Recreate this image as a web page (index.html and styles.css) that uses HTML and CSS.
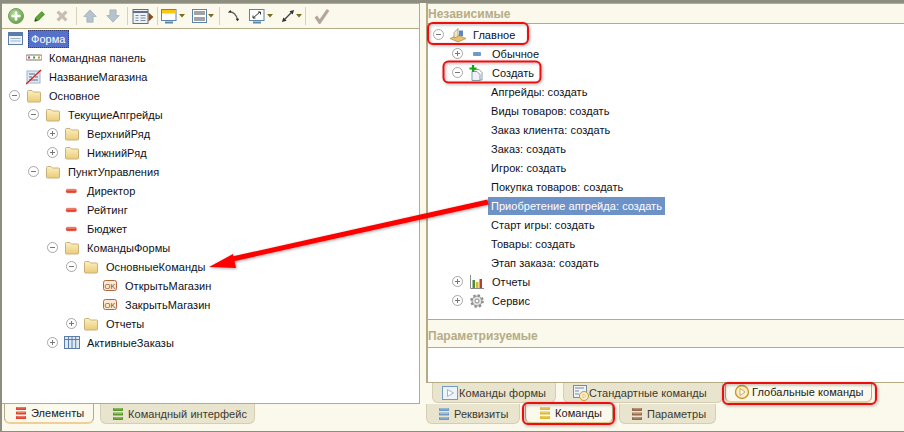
FILE: index.html
```html
<!DOCTYPE html>
<html lang="en">
<head>
  <meta charset="UTF-8">
  <meta name="viewport" content="width=device-width, initial-scale=1.0">
  <title>Форма</title>
  <link rel="stylesheet" href="styles.css">
</head>
<body>
  <svg class="defs" width="0" height="0">
    <defs>
      <linearGradient id="folder" x1="0" y1="0" x2="0" y2="1">
        <stop offset="0" stop-color="#fdf0c0"/>
        <stop offset="1" stop-color="#eacb78"/>
      </linearGradient>
      <radialGradient id="addball" cx=".4" cy=".35" r=".7">
        <stop offset="0" stop-color="#b4dc98"/>
        <stop offset="1" stop-color="#5f9f45"/>
      </radialGradient>
      <symbol id="i-folder" viewBox="0 0 16 16">
        <path d="M1.500 13V3.500q0-1 1-1h3.500l1.500 1.500h6q1 0 1 1V13q0 1-1 1h-11q-1 0-1-1z" fill="url(#folder)" stroke="#c9b27a"/>
      </symbol>
      <symbol id="i-attr" viewBox="0 0 16 16">
        <rect x="2" y="6" width="10.500" height="4" rx="1.500" fill="#e8402a" stroke="#d8a090" stroke-width=".5"/>
        <rect x="3" y="6.500" width="8.500" height="1" fill="#f6a08c"/>
      </symbol>
      <symbol id="i-ok" viewBox="0 0 16 16">
        <rect x="1.500" y="2.500" width="13" height="10" rx="2" fill="#fbe8d8" stroke="#b5673a"/>
        <text x="8" y="10.500" font-size="7.500" font-family="Liberation Sans" text-anchor="middle" fill="#8a4a20">OK</text>
      </symbol>
      <symbol id="i-table" viewBox="0 0 16 16">
        <rect x=".5" y="1.500" width="15" height="12" fill="#dfe9f5" stroke="#5c7ea6"/>
        <path d="M.5 4.500h15M4.500 1.500v12M8 1.500v12M11.700 1.500v12" stroke="#5c7ea6" fill="none"/>
      </symbol>
      <symbol id="i-stack" viewBox="1 0 10 14">
        <rect x="1" y="1" width="10" height="3" rx=".6" fill="currentColor"/>
        <rect x="1" y="5.500" width="10" height="3" rx=".6" fill="currentColor"/>
        <rect x="1" y="10" width="10" height="3" rx=".6" fill="currentColor"/>
        <path d="M2 1.800h8M2 6.300h8M2 10.800h8" stroke="#fff" stroke-opacity=".5" stroke-width=".8"/>
      </symbol>
      <symbol id="i-play" viewBox="0 0 16 16">
        <circle cx="8" cy="8" r="6.500" fill="#fbeec4" stroke="#c9962e" stroke-width="1.400"/>
        <path d="M6 4.500l5 3.500-5 3.500z" fill="#fff" stroke="#c9a860"/>
      </symbol>
      <symbol id="i-drop" viewBox="0 0 6 4">
        <path d="M0 0h6L3 3.500z" fill="#7a6a20"/>
      </symbol>
    </defs>
  </svg>

  <div class="window">
    <div class="left">
      <div class="toolbar">
        <svg class="tool" width="18" height="18" viewBox="0 0 18 18"><circle cx="9" cy="9" r="7.500" fill="url(#addball)" stroke="#7a9a6a"/><path d="M9 4.500v9M4.500 9h9" stroke="#fff" stroke-width="2.600"/></svg>
        <svg class="tool ml8" width="14" height="14" viewBox="0 0 16 16"><path d="M2 14l1-4 7-7 3 3-7 7z" fill="#5fa832" stroke="#3c7a1e"/><path d="M2 14l1-3 2 2z" fill="#333"/></svg>
        <svg class="tool ml8" width="14" height="14" viewBox="0 0 16 16"><path d="M3 3l10 10M13 3L3 13" stroke="#c8bdb2" stroke-width="3.800"/></svg>
        <i class="tool-sep ml7"></i>
        <svg class="tool ml6" width="14" height="14" viewBox="0 0 16 16"><path d="M8 1l7 7.500h-3.500V15h-7V8.500H1z" fill="#b6c3cc" stroke="#a4b2bb"/></svg>
        <svg class="tool ml9" width="14" height="14" viewBox="0 0 16 16"><path d="M8 15l7-7.500h-3.500V1h-7v6.500H1z" fill="#b6c3cc" stroke="#a4b2bb"/></svg>
        <i class="tool-sep ml7"></i>
        <svg class="tool ml4" width="22" height="15" viewBox="0 0 21 15"><rect x=".5" y=".5" width="15" height="14" fill="#eef2f7" stroke="#5c7088"/><path d="M.5 3h15" stroke="#5c7088" stroke-width="2"/><path d="M3 6.500h3M3 9h3M3 11.500h3M8 6.500h5M8 9h5M8 11.500h5" stroke="#7d8ba0"/><path d="M16 3.500l5 4.500-5 4.500z" fill="#8a4a20"/></svg>
        <i class="tool-sep ml3"></i>
        <svg class="tool ml3" width="16" height="15" viewBox="0 0 16 15"><rect x=".5" y=".5" width="14.500" height="11" fill="#fff" stroke="#5c86a8"/><rect x="1" y="1" width="13.500" height="3.500" fill="#fcc60c"/><path d="M4 13.500h8" stroke="#5c86a8" stroke-width="2"/></svg>
        <svg class="drop ml2"><use href="#i-drop"/></svg>
        <svg class="tool ml7" width="15" height="14" viewBox="0 0 15 14"><rect x=".5" y=".5" width="14" height="13" fill="#fff" stroke="#5c86a8"/><rect x="2" y="2" width="11" height="4" fill="#a3a3a3"/><rect x="2" y="8" width="11" height="4" fill="#a3a3a3"/></svg>
        <svg class="drop ml1"><use href="#i-drop"/></svg>
        <i class="tool-sep ml5"></i>
        <svg class="tool ml7" width="14" height="14" viewBox="0 0 16 16"><path d="M3 3q7 1 9 9" fill="none" stroke="#555" stroke-width="1.400"/><path d="M1 4l3-3 1 3zM10 11h4l-2 3z" fill="#222"/></svg>
        <svg class="tool ml8" width="16" height="15" viewBox="0 0 16 15"><rect x=".5" y=".5" width="14.500" height="11" fill="#fff" stroke="#5c86a8"/><path d="M4 9l7-6M9 3h2.500v2.500M4 6.500V9h2.500" fill="none" stroke="#333"/><path d="M4 13.500h8" stroke="#5c86a8" stroke-width="2"/></svg>
        <svg class="drop ml2"><use href="#i-drop"/></svg>
        <svg class="tool ml8" width="14" height="14" viewBox="0 0 15 15"><path d="M3 12l9-9" stroke="#444" stroke-width="1.400"/><path d="M1 14l1.500-5 3.500 3.500zM14 1l-5 1.500 3.500 3.500z" fill="#333"/></svg>
        <svg class="drop ml1"><use href="#i-drop"/></svg>
        <i class="tool-sep ml3"></i>
        <svg class="tool ml8" width="16" height="15" viewBox="0 0 17 16"><path d="M2 8l4 6L15 1" fill="none" stroke="#b5a5a0" stroke-width="3.400"/></svg>
      </div>

      <div class="tree-box">
        <div class="row root"><svg class="icon" viewBox="0 0 16 16"><rect x=".5" y="1.500" width="14" height="12" fill="#eef3f8" stroke="#5c7ea6"/><rect x="1" y="2" width="13" height="3" fill="#5c7ea6"/><path d="M2.500 7.500h10M2.500 10h10" stroke="#9fb4cc"/></svg><span class="text selected">Форма</span></div>
        <div class="row"><span class="toggle none"></span><svg class="icon" viewBox="0 0 16 16"><rect x="0" y="5" width="16" height="5" rx="1" fill="#fff" stroke="#777"/><path d="M2 7.500h2" stroke="#c44" stroke-width="2"/><path d="M7 7.500h2" stroke="#3a3" stroke-width="2"/><path d="M12 7.500h2" stroke="#c90" stroke-width="2"/></svg><span class="text">Командная панель</span></div>
        <div class="row"><span class="toggle none"></span><svg class="icon" viewBox="0 0 16 16"><rect x="1" y="2" width="13" height="12" fill="#dfe9f5" stroke="#9fb4cc"/><path d="M3 5h6M3 8h3M9 8h3M3 11h9" stroke="#667"/><path d="M0 15L15 1" stroke="#e01010" stroke-width="1.200"/></svg><span class="text">НазваниеМагазина</span></div>
        <div class="row"><span class="toggle minus"></span><svg class="icon"><use href="#i-folder"/></svg><span class="text">Основное</span></div>
        <div class="row d1"><span class="toggle minus"></span><svg class="icon"><use href="#i-folder"/></svg><span class="text">ТекущиеАпгрейды</span></div>
        <div class="row d2"><span class="toggle plus"></span><svg class="icon"><use href="#i-folder"/></svg><span class="text">ВерхнийРяд</span></div>
        <div class="row d2"><span class="toggle plus"></span><svg class="icon"><use href="#i-folder"/></svg><span class="text">НижнийРяд</span></div>
        <div class="row d1"><span class="toggle minus"></span><svg class="icon"><use href="#i-folder"/></svg><span class="text">ПунктУправления</span></div>
        <div class="row d2"><span class="toggle none"></span><svg class="icon"><use href="#i-attr"/></svg><span class="text">Директор</span></div>
        <div class="row d2"><span class="toggle none"></span><svg class="icon"><use href="#i-attr"/></svg><span class="text">Рейтинг</span></div>
        <div class="row d2"><span class="toggle none"></span><svg class="icon"><use href="#i-attr"/></svg><span class="text">Бюджет</span></div>
        <div class="row d2"><span class="toggle minus"></span><svg class="icon"><use href="#i-folder"/></svg><span class="text">КомандыФормы</span></div>
        <div class="row d3"><span class="toggle minus"></span><svg class="icon"><use href="#i-folder"/></svg><span class="text">ОсновныеКоманды</span></div>
        <div class="row d4"><span class="toggle none"></span><svg class="icon"><use href="#i-ok"/></svg><span class="text">ОткрытьМагазин</span></div>
        <div class="row d4"><span class="toggle none"></span><svg class="icon"><use href="#i-ok"/></svg><span class="text">ЗакрытьМагазин</span></div>
        <div class="row d3"><span class="toggle plus"></span><svg class="icon"><use href="#i-folder"/></svg><span class="text">Отчеты</span></div>
        <div class="row d2"><span class="toggle plus"></span><svg class="icon"><use href="#i-table"/></svg><span class="text">АктивныеЗаказы</span></div>
      </div>

      <div class="tabs left-tabs">
        <div class="tab active w-elements"><svg class="stack red"><use href="#i-stack"/></svg>Элементы</div>
        <div class="tab w-iface"><svg class="stack green"><use href="#i-stack"/></svg>Командный интерфейс</div>
      </div>
    </div>

    <div class="right">
      <div class="right-box">
        <div class="section-head">Независимые</div>
        <div class="tree-right">
          <div class="row"><span class="toggle minus"></span><svg class="icon" viewBox="0 0 16 16"><path d="M0 11.500l8-3.500 8 3.500-8 3.500z" fill="#e8c070" stroke="#a88a50" stroke-width=".7"/><path d="M4 11V5.500l4-4v8z" fill="#efe8c0" stroke="#8a8a70" stroke-width=".7"/><path d="M9 9V3.500h4V9z" fill="#5c86c8"/></svg><span class="text">Главное</span></div>
          <div class="row d1"><span class="toggle plus"></span><svg class="icon" viewBox="0 0 16 16"><rect x="4" y="6" width="8" height="4" rx="1" fill="#6f9bc8"/></svg><span class="text">Обычное</span></div>
          <div class="row d1"><span class="toggle minus"></span><svg class="icon" viewBox="0 0 16 16"><path d="M5 4.500h5l3 3v7.500H5z" fill="#fff" stroke="#8a9aa8"/><path d="M3 6.500h5l3 3v6H3z" fill="#eef2f6" stroke="#8a9aa8"/><path d="M4 0v7M.5 3.500h7" stroke="#12a812" stroke-width="2.200"/></svg><span class="text">Создать</span></div>
          <div class="row item"><span class="text">Апгрейды: создать</span></div>
          <div class="row item"><span class="text">Виды товаров: создать</span></div>
          <div class="row item"><span class="text">Заказ клиента: создать</span></div>
          <div class="row item"><span class="text">Заказ: создать</span></div>
          <div class="row item"><span class="text">Игрок: создать</span></div>
          <div class="row item"><span class="text">Покупка товаров: создать</span></div>
          <div class="row item"><span class="text hilite">Приобретение апгрейда: создать</span></div>
          <div class="row item"><span class="text">Старт игры: создать</span></div>
          <div class="row item"><span class="text">Товары: создать</span></div>
          <div class="row item"><span class="text">Этап заказа: создать</span></div>
          <div class="row d1"><span class="toggle plus"></span><svg class="icon" viewBox="0 0 16 16"><path d="M1.500 1v13.500H15" fill="none" stroke="#8a8a8a"/><rect x="3.500" y="6" width="2.500" height="8" fill="#4c8a3c"/><rect x="7" y="8" width="2.500" height="6" fill="#d8b830"/><rect x="10.500" y="5" width="2.500" height="9" fill="#b04030"/></svg><span class="text">Отчеты</span></div>
          <div class="row d1"><span class="toggle plus"></span><svg class="icon" viewBox="0 0 16 16"><circle cx="8" cy="8" r="5.500" fill="#e4e4e4" stroke="#8a8a8a" stroke-width="2.600" stroke-dasharray="2.200 2.120"/><circle cx="8" cy="8" r="5" fill="none" stroke="#9a9a9a"/><circle cx="8" cy="8" r="2" fill="#fff" stroke="#8a8a8a"/></svg><span class="text">Сервис</span></div>
        </div>
        <div class="section-head second">Параметризуемые</div>
        <div class="blank"></div>
      </div>

      <div class="tabs sub-tabs">
        <div class="tab w-form"><svg class="tab-icon" viewBox="0 0 16 16"><rect x=".5" y="1.500" width="15" height="13" fill="#eef3f8" stroke="#6f9bc8"/><path d="M5.500 4.500l6 3.500-6 3.500z" fill="#fff" stroke="#9fb4cc"/></svg>Команды формы</div>
        <div class="tab w-std"><svg class="tab-icon" viewBox="0 0 16 16"><rect x=".5" y=".5" width="13" height="12" fill="#eef3f8" stroke="#7d8ba0"/><path d="M2 3h9M2 6h4M2 9h4" stroke="#7d8ba0"/><circle cx="11" cy="11" r="4.500" fill="#fbeec4" stroke="#c9962e"/><path d="M10 9l3 2-3 2z" fill="#fff" stroke="#c9a860" stroke-width=".6"/></svg>Стандартные команды</div>
        <div class="tab active w-global"><svg class="tab-icon"><use href="#i-play"/></svg>Глобальные команды</div>
      </div>
      <div class="tabs main-tabs">
        <div class="tab w-req"><svg class="stack blue"><use href="#i-stack"/></svg>Реквизиты</div>
        <div class="tab active w-cmd"><svg class="stack yellow"><use href="#i-stack"/></svg>Команды</div>
        <div class="tab w-par"><svg class="stack brown"><use href="#i-stack"/></svg>Параметры</div>
      </div>
    </div>
  </div>

  <!-- red notes drawn over the screenshot -->
  <svg class="marks" width="904" height="432" viewBox="0 0 904 432">
    <defs>
      <filter id="soft" x="-10%" y="-30%" width="120%" height="160%"><feDropShadow dx="1" dy="1" stdDeviation="1.500" flood-color="#000" flood-opacity=".35"/></filter>
    </defs>
    <g fill="none" stroke="#ee1111" stroke-width="2" filter="url(#soft)">
      <rect x="428" y="23" width="100" height="21" rx="5"/>
      <rect x="443.500" y="61.500" width="97" height="21" rx="5"/>
      <rect x="523" y="403" width="91" height="21" rx="5"/>
      <rect x="723" y="383" width="153" height="21" rx="5"/>
    </g>
    <g filter="url(#soft)">
      <path d="M488 202L228 260" stroke="#ff0000" stroke-width="5" fill="none"/>
      <path d="M209 267L233 254L236 268z" fill="#ff0000"/>
    </g>
  </svg>
</body>
</html>
```

FILE: styles.css
```css
html, body {
  margin: 0;
  padding: 0;
}
body {
  width: 904px;
  height: 432px;
  overflow: hidden;
  position: relative;
  font-family: "Liberation Sans", Arial, sans-serif;
  font-size: 11px;
  letter-spacing: 0.05px;
  color: #101020;
}
.defs {
  position: absolute;
}
.window {
  box-sizing: border-box;
  height: 432px;
  display: flex;
  background-color: #fbf9ec;
  border-top: 3px solid #8d8d80;
  border-left: 2px solid #8d8d80;
  border-bottom: 1px solid #8d8d80;
}
.left {
  width: 418px;
  display: flex;
  flex-direction: column;
}
.right {
  flex: 1;
  margin-left: 6px;
  display: flex;
  flex-direction: column;
}

/* toolbar */
.toolbar {
  height: 24px;
  display: flex;
  align-items: center;
  padding-left: 5px;
  border-right: 1px solid #b5ac87;
  border-top: 1px solid #b5ac87;
}
.tool {
  flex: none;
}
.tool-sep {
  width: 1px;
  height: 18px;
  background-color: #d6d2bc;
}
.drop {
  flex: none;
  width: 6px;
  height: 4px;
}
.ml1 { margin-left: 1px; }
.ml2 { margin-left: 2px; }
.ml3 { margin-left: 3px; }
.ml4 { margin-left: 4px; }
.ml5 { margin-left: 5px; }
.ml6 { margin-left: 6px; }
.ml7 { margin-left: 7px; }
.ml8 { margin-left: 8px; }
.ml9 { margin-left: 9px; }

/* trees */
.tree-box {
  flex: 1;
  box-sizing: border-box;
  background-color: #fff;
  border-top: 1px solid #b5ac87;
  border-right: 1px solid #b5ac87;
  border-bottom: 1px solid #b5ac87;
}
.row {
  height: 19px;
  display: flex;
  align-items: center;
  padding-left: 7px;
}
.row.root {
  padding-left: 6px;
}
.d1 { padding-left: 26px; }
.d2 { padding-left: 45px; }
.d3 { padding-left: 64px; }
.d4 { padding-left: 83px; }
.toggle {
  flex: none;
  box-sizing: border-box;
  width: 11px;
  height: 11px;
  margin-right: 6px;
  border: 1px solid #a8a8a8;
  border-radius: 50%;
  background-color: #fff;
  position: relative;
}
.toggle.none {
  border-color: transparent;
}
.toggle.minus::before,
.toggle.plus::before {
  content: "";
  position: absolute;
  left: 2px;
  top: 4px;
  width: 5px;
  height: 1px;
  background-color: #777;
}
.toggle.plus::after {
  content: "";
  position: absolute;
  left: 4px;
  top: 2px;
  width: 1px;
  height: 5px;
  background-color: #777;
}
.icon {
  flex: none;
  width: 16px;
  height: 16px;
  margin-right: 7px;
}
.text {
  white-space: nowrap;
  line-height: 18px;
  padding: 0 3px;
  margin-left: -3px;
}
.text.selected {
  background-color: #5672c8;
  color: #fff;
  outline: 1px dotted #333a70;
  outline-offset: -1px;
}
.text.hilite {
  background-color: #6d92c8;
  color: #fff;
}

/* right side */
.right-box {
  flex: 1;
  display: flex;
  flex-direction: column;
  border-top: 1px solid #b5ac87;
  border-left: 2px solid #b5ac87;
  border-bottom: 1px solid #b5ac87;
}
.section-head {
  height: 19px;
  line-height: 21px;
  font-size: 12px;
  letter-spacing: 0;
  font-weight: bold;
  color: #b5ac87;
  border-bottom: 1px solid #b5ac87;
}
.section-head.second {
  box-sizing: border-box;
  height: 28px;
  line-height: 32px;
  border-top: 1px solid #b5ac87;
  border-bottom: 0;
}
.tree-right {
  height: 294px;
  background-color: #fff;
  padding-top: 1px;
}
.tree-right .row {
  padding-left: 5px;
}
.tree-right .row.d1 {
  padding-left: 24px;
}
.tree-right .row.item {
  padding-left: 63px;
}
.blank {
  flex: 1;
  background-color: #fff;
  border-top: 1px solid #b5ac87;
}

/* tabs */
.tabs {
  height: 21px;
  flex: none;
  display: flex;
}
.tab {
  box-sizing: border-box;
  height: 20px;
  display: flex;
  align-items: center;
  margin-right: 6px;
  white-space: nowrap;
  background-color: #e9e4ce;
  color: #3a3a30;
  border: 1px solid #d4cfb4;
  border-top: 0;
  border-radius: 0 0 6px 6px;
}
.tab.active {
  background-color: #fbf9ec;
  border-color: #b5ac87;
  border-bottom: 2px solid #eecf98;
  color: #222;
}
.left-tabs {
  padding-left: 2px;
  height: 27px;
}
.sub-tabs { padding-left: 6px; }
.main-tabs { height: 27px; }
.w-elements { width: 90px; padding-left: 11px; }
.w-iface { width: 155px; padding-left: 12px; }
.w-form { width: 124px; padding-left: 9px; margin-right: 7px; }
.w-std { width: 160px; padding-left: 9px; margin-right: 2px; }
.w-global { width: 147px; padding-left: 8px; }
.w-req { width: 94px; padding-left: 12px; margin-right: 5px; }
.w-cmd { width: 88px; padding-left: 14px; }
.w-par { width: 97px; padding-left: 12px; }
.stack {
  flex: none;
  width: 10px;
  height: 14px;
  margin-right: 5px;
}
.stack.red { color: #e0432c; }
.stack.green { color: #5a9a2c; }
.stack.blue { color: #6f9bc8; }
.stack.yellow { color: #e0b832; }
.stack.brown { color: #96694a; }
.tab-icon {
  flex: none;
  width: 16px;
  height: 16px;
  margin-right: 2px;
}
.w-form .tab-icon { margin-right: 1px; }
.w-std .tab-icon { margin-right: 0; }

/* annotations */
.marks {
  position: absolute;
  left: 0;
  top: 0;
  pointer-events: none;
}
```
